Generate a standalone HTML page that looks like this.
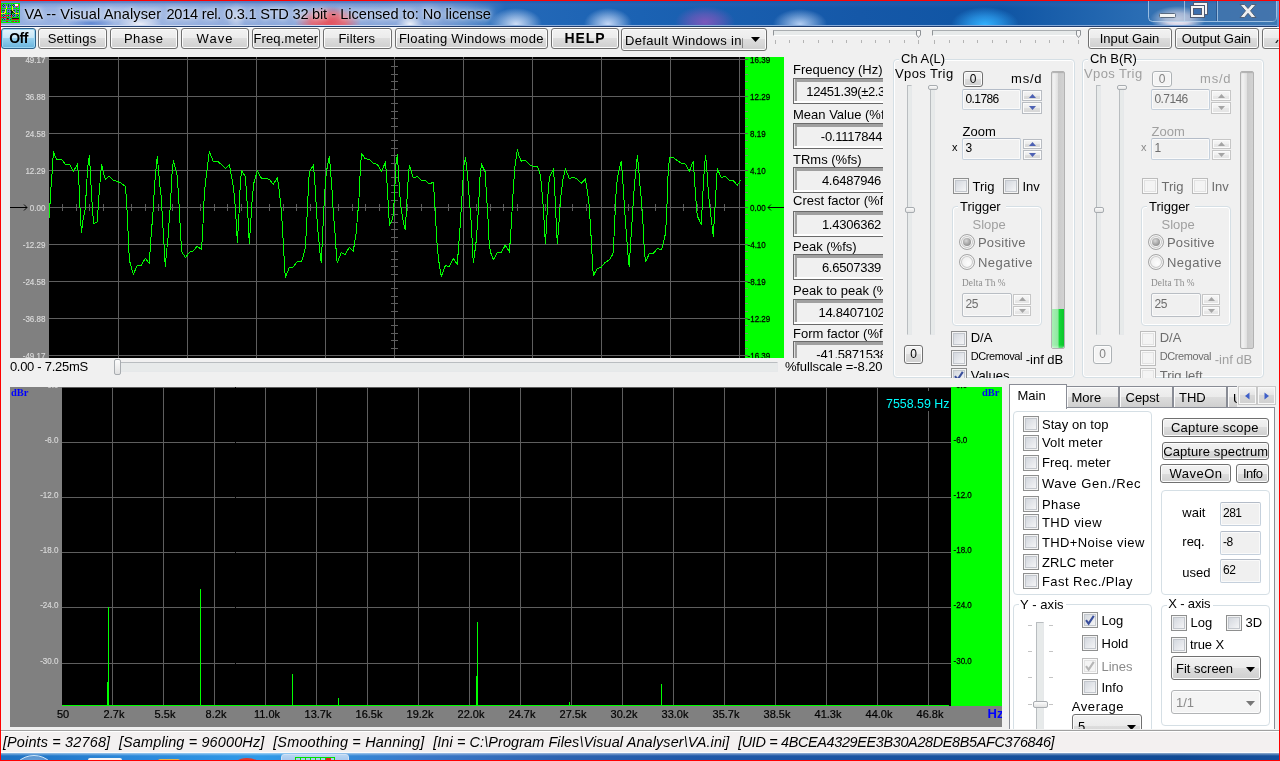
<!DOCTYPE html>
<html lang="en"><head><meta charset="utf-8">
<title>VA -- Visual Analyser 2014 rel. 0.3.1 STD 32 bit</title>
<style>
html,body{margin:0;padding:0;}
body{width:1280px;height:761px;overflow:hidden;background:#f0f0f0;font-family:"Liberation Sans",sans-serif;font-size:13px;color:#000;position:relative;}
#win{position:absolute;left:0;top:0;width:1280px;height:761px;overflow:hidden;background:#f0f0f0;will-change:transform;}
#win div{position:absolute;box-sizing:content-box;}
.t{white-space:pre;}
.btn{border:1px solid #707070;border-radius:3px;box-shadow:inset 0 0 0 1px #fcfcfc;
 background:linear-gradient(to bottom,#f2f2f2 0%,#ebebeb 50%,#dddddd 50%,#cfcfcf 100%);
 text-align:center;white-space:pre;overflow:hidden;}
.btn span{display:block;font-size:13px;}
.btn.def{border-color:#2c628b;box-shadow:inset 0 0 0 1px #9ed7f3;
 background:linear-gradient(to bottom,#e5f4fc 0%,#c4e5f6 50%,#98d1ef 50%,#68b3db 100%);}
.btn.dis{border-color:#adb2b5;background:#f4f4f4;color:#838383;}
.grp{border:1px solid #d5dfe5;border-radius:4px;box-shadow:inset 0 0 0 1px #fff;}
.cb{border:1px solid #8e8f8f;background:linear-gradient(135deg,#cdd2d9 0%,#e6e8ec 55%,#fbfbfb 100%);box-shadow:inset 0 0 0 1px #f4f4f4,inset 0 0 0 2px #c3c7cd;}
.cb.dis{border-color:#bcbcbc;background:#f4f4f4;box-shadow:inset 0 0 0 1px #fafafa,inset 0 0 0 2px #e2e2e2;}
.cb svg{position:absolute;left:0;top:0;}
.rd{border:1px solid #a6a6a6;border-radius:50%;background:radial-gradient(circle at 60% 60%,#fdfdfd 0%,#f0f0f0 55%,#dcdcdc 100%);box-shadow:inset 0 0 0 1px #f8f8f8,inset 0 0 0 2px #cacaca;}
.rd i{position:absolute;left:3px;top:3px;right:3px;bottom:3px;border-radius:50%;background:radial-gradient(circle at 40% 35%,#d8d8d8 0%,#9c9c9c 60%,#888 100%);}
.edit{border:1px solid #c5d0dc;border-top-color:#b4bcc8;background:#f0f0f0;border-radius:2px;box-shadow:inset 0 0 0 1px #fafafa;}
.edit.w{background:#f0f0f0;}
.sunk{border:1px solid #6a6a6a;background:#f0f0f0;box-shadow:inset 0 -2px 0 0 #fff,inset 1px 0 0 0 #dedede,inset 3px 3px 0 0 #a0a0a0;overflow:hidden;}
.spn{border:1px solid #b8bcc2;background:linear-gradient(to bottom,#f4f4f4 0%,#ececec 50%,#dedede 50%,#d4d4d4 100%);box-shadow:inset 0 0 0 1px #fbfbfb;}
.spn.dis{border-color:#c6c6c6;background:linear-gradient(to bottom,#f6f6f6 0%,#f0f0f0 50%,#e8e8e8 50%,#e4e4e4 100%);}
.trk{border:1px solid #b9bdc0;border-right-color:#e6e8ea;border-bottom-color:#e6e8ea;background:#e7eaea;}
.thumb{border:1px solid #a8acb0;border-radius:2px;background:linear-gradient(to bottom,#fcfcfc,#e2e2e2);}
.combo{border:1px solid #707070;border-radius:3px;box-shadow:inset 0 0 0 1px #fcfcfc;
 background:linear-gradient(to bottom,#f2f2f2 0%,#ebebeb 50%,#dddddd 50%,#cfcfcf 100%);overflow:hidden;}
.combo.dis{border-color:#b2b4b6;background:#f4f4f4;}
.tab{border:1px solid #898c95;border-bottom:none;background:linear-gradient(to bottom,#f2f2f2 0%,#ebebeb 50%,#dddddd 50%,#cfcfcf 100%);box-shadow:inset 1px 1px 0 0 #fcfcfc;}
</style></head><body><div id="win">

<div id="titlebar" style="left:0;top:0;width:1280px;height:25px;overflow:hidden;
background:
 radial-gradient(ellipse 33px 16px at 328px 22px, rgba(228,80,92,1) 0%, rgba(232,96,108,.9) 50%, rgba(235,110,120,0) 100%),
 radial-gradient(ellipse 24px 5px at 91px 23px, rgba(60,110,200,.75) 0%, rgba(60,110,200,0) 100%),
 radial-gradient(ellipse 22px 7px at 140px 24px, rgba(245,245,250,.9) 0%, rgba(245,245,250,0) 100%),
 radial-gradient(ellipse 9px 16px at 236px 18px, rgba(235,238,248,.55) 0%, rgba(235,238,248,0) 100%),
 radial-gradient(ellipse 14px 8px at 410px 24px, rgba(255,255,255,.85) 0%, rgba(255,255,255,0) 100%),
 radial-gradient(ellipse 26px 16px at 516px 24px, rgba(215,228,250,.95) 0%, rgba(215,228,250,.5) 50%, rgba(210,225,250,0) 100%),
 radial-gradient(ellipse 24px 16px at 608px 24px, rgba(205,222,250,.95) 0%, rgba(205,222,250,.5) 50%, rgba(200,220,250,0) 100%),
 radial-gradient(ellipse 30px 16px at 705px 22px, rgba(128,88,188,.95) 0%, rgba(128,88,188,.55) 50%, rgba(130,90,190,0) 100%),
 radial-gradient(ellipse 27px 15px at 800px 24px, rgba(195,218,250,.9) 0%, rgba(195,218,250,.45) 50%, rgba(190,215,250,0) 100%),
 radial-gradient(ellipse 34px 18px at 985px 25px, rgba(50,178,255,1) 0%, rgba(50,170,250,.6) 50%, rgba(60,180,255,0) 100%),
 radial-gradient(ellipse 28px 13px at 1178px 19px, rgba(255,244,248,1) 0%, rgba(255,238,244,.8) 45%, rgba(255,235,240,0) 100%),
 linear-gradient(to bottom, rgba(40,85,170,.55) 0, rgba(40,85,170,.55) 2px, rgba(60,100,180,.25) 4px, rgba(60,100,180,0) 8px),
 linear-gradient(to right,#93aee0 0px,#9fb7e4 120px,#8eaadc 250px,#86a5da 430px,#5a8ccc 470px,#2469b8 505px,#1b62b3 640px,#1558a8 860px,#0f55a4 1000px,#2a6db4 1140px,#3f78b2 1280px);">
</div>
<div style="left:0px;top:25px;width:1280px;height:1px;background:linear-gradient(to right,#d3def2 0,#c8d6f0 400px,#8fb0dc 480px,#7fa5d6 1280px)"></div>
<div style="left:0px;top:26px;width:1280px;height:1px;background:#1f3d70"></div>
<div style="left:0px;top:27px;width:1280px;height:1px;background:#fbfbfb"></div>
<div style="left:1px;top:3px;width:19px;height:20px;background:#00e000;overflow:hidden">
<svg width="19" height="20" viewBox="0 0 19 20" shape-rendering="crispEdges" style="position:absolute;left:0;top:0">
<rect width="19" height="20" fill="#00f000"/>
<rect x="1" y="1" width="17" height="18" fill="#5a6fd8"/>
<g stroke="#0a6a20" stroke-width="1" stroke-dasharray="1 1"><path d="M1 2.500H18M1 7.500H18M1 12.500H18M1 16.500H18M2.500 1V19M7.500 1V19M12.500 1V19M16.500 1V19"/></g>
<g stroke="#00e400" stroke-width="1"><path d="M0 5.500H19M0 10.500H19M0 14.500H19M5.500 0V19M10.500 0V19M15.500 0V19"/></g>
<rect x="1" y="17" width="17" height="1" fill="#10d820"/><path d="M5 18.500H8M11 18.500H18" stroke="#c02818" stroke-dasharray="2 1"/>
<g fill="#081808"><rect x="10" y="7" width="2" height="3"/><rect x="10" y="10" width="1" height="2"/><rect x="13" y="10" width="1" height="1"/><rect x="11" y="15" width="7" height="1"/><rect x="6" y="15" width="1" height="1"/></g>
<path d="M0 10.500H3.500L4.500 8.500L5.500 3.500" stroke="#f4ec20" fill="none"/><path d="M11.500 3V7.500L13.500 9.500L15 10.500H18" stroke="#f4ec20" fill="none"/>
<rect x="0" y="14" width="6" height="1" fill="#e81818"/><rect x="4" y="12" width="4" height="1" fill="#e81818"/><rect x="10" y="12" width="1" height="3" fill="#e81818"/><rect x="5" y="16" width="3" height="1" fill="#d02020"/><rect x="11" y="16" width="7" height="1" fill="#d02020"/>
<rect x="14" y="1" width="3" height="2" fill="#fff"/><rect x="15" y="3" width="2" height="1" fill="#f03030"/><rect x="17" y="1" width="1" height="2" fill="#f03030"/>
</svg></div>
<div class="t" style="left:24.4px;top:7.04px;font-size:14.6px;line-height:14.6px;color:#000;letter-spacing:0.089px;text-shadow:0 0 6px rgba(255,255,255,.85),0 0 10px rgba(255,255,255,.6),0 0 3px rgba(255,255,255,.5);">VA -- Visual Analyser</div>
<div class="t" style="left:166.4px;top:7.04px;font-size:14.6px;line-height:14.6px;color:#000;letter-spacing:-0.225px;text-shadow:0 0 6px rgba(255,255,255,.85),0 0 10px rgba(255,255,255,.6),0 0 3px rgba(255,255,255,.5);">2014 rel. 0.3.1 STD 32 bit</div>
<div class="t" style="left:331.29999999999995px;top:7.04px;font-size:14.6px;line-height:14.6px;color:#000;letter-spacing:-0.009px;text-shadow:0 0 6px rgba(255,255,255,.85),0 0 10px rgba(255,255,255,.6),0 0 3px rgba(255,255,255,.5);">- Licensed to: No license</div>
<div style="left:1148px;top:0;width:130px;height:23px">
<svg width="130" height="23" viewBox="0 0 130 23">
<path d="M0.5 -1V17.5Q0.5 21.5 4.5 21.5H124.5Q128.5 21.5 128.5 17.5V-1" fill="rgba(70,120,175,.35)" stroke="rgba(190,215,240,.75)" stroke-width="1"/>
<path d="M36.5 0V21M69.5 0V21" stroke="rgba(190,215,240,.7)" stroke-width="1"/>
<path d="M69.5 0V21" stroke="rgba(30,60,110,.5)" stroke-width="1" transform="translate(-1,0)"/>
<rect x="71" y="0" width="57" height="21" fill="rgba(70,115,170,.55)"/>
<rect x="11.5" y="13.5" width="16" height="4" rx="1" fill="#f4f4f4" stroke="#5a6a80" stroke-width="1"/>
<g stroke="#4d5a74" stroke-width="1"><rect x="45.500" y="2.500" width="14" height="12" fill="#f4f4f4"/><rect x="48.500" y="5.500" width="8" height="6" fill="#3d6fae"/>
<rect x="42.500" y="5.500" width="14" height="12" fill="#f4f4f4"/><rect x="45.500" y="8.500" width="8" height="6" fill="#3d6fae"/></g>
<path d="M92 4.500H96.500L100 8.500L103.500 4.500H108L102.500 10.800L108 17.500H103.500L100 13.300L96.500 17.500H92L97.500 10.800Z" fill="#f0f0f0" stroke="#4a5a72" stroke-width="0.9"/>
</svg></div>
<div style="left:1277px;top:0px;width:2px;height:27px;background:linear-gradient(to bottom,#6f9fd0,#5f8fc8)"></div>
<div class="btn def" style="left:1px;top:28px;width:33px;height:19px;"><span style=""></span></div>
<div class="t" style="left:9.200000000000001px;top:31.45px;font-size:14px;line-height:14px;color:#000;letter-spacing:-0.509px;font-weight:bold;">Off</div>
<div class="btn" style="left:38px;top:28px;width:66.5px;height:19px;"><span style=""></span></div>
<div class="t" style="left:47.699999999999996px;top:31.70px;font-size:13px;line-height:13px;color:#000;letter-spacing:0.217px;">Settings</div>
<div class="btn" style="left:110px;top:28px;width:66px;height:19px;"><span style=""></span></div>
<div class="t" style="left:123.9px;top:31.70px;font-size:13px;line-height:13px;color:#000;letter-spacing:0.556px;">Phase</div>
<div class="btn" style="left:181px;top:28px;width:66px;height:19px;"><span style=""></span></div>
<div class="t" style="left:196.6px;top:31.70px;font-size:13px;line-height:13px;color:#000;letter-spacing:1.083px;">Wave</div>
<div class="btn" style="left:252px;top:28px;width:66px;height:19px;"><span style=""></span></div>
<div class="t" style="left:253.4px;top:31.70px;font-size:13px;line-height:13px;color:#000;letter-spacing:0.136px;">Freq.meter</div>
<div class="btn" style="left:323px;top:28px;width:66.5px;height:19px;"><span style=""></span></div>
<div class="t" style="left:338.4px;top:31.70px;font-size:13px;line-height:13px;color:#000;letter-spacing:0.218px;">Filters</div>
<div class="btn" style="left:395px;top:28px;width:151px;height:19px;"><span style=""></span></div>
<div class="t" style="left:398.9px;top:31.70px;font-size:13px;line-height:13px;color:#000;letter-spacing:0.288px;">Floating Windows mode</div>
<div class="btn" style="left:551px;top:28px;width:66px;height:19px;"><span style=""></span></div>
<div class="t" style="left:564.4px;top:31.25px;font-size:14px;line-height:14px;color:#000;letter-spacing:0.952px;font-weight:bold;">HELP</div>
<div class="combo" style="left:621px;top:28px;width:144px;height:21px"><span class="t" style="position:absolute;left:3px;top:3.500px;font-size:13px;line-height:16px;width:118px;letter-spacing:.3px;overflow:hidden;display:block;white-space:pre">Default Windows input</span><svg style="position:absolute;left:129px;top:8px" width="9" height="5" viewBox="0 0 9 5"><polygon points="0,0 9,0 4.5,5" fill="#000"/></svg></div>
<div class="trk" style="left:773px;top:30px;width:146px;height:4px;border-top-color:#a9adb0;border-left-color:#8f9396;border-bottom-color:#fdfdfd"></div>
<div style="left:775px;top:40px;width:1px;height:4px;background:#b4b4b4"></div>
<div style="left:789px;top:40px;width:1px;height:3px;background:#b4b4b4"></div>
<div style="left:803px;top:40px;width:1px;height:3px;background:#b4b4b4"></div>
<div style="left:818px;top:40px;width:1px;height:3px;background:#b4b4b4"></div>
<div style="left:832px;top:40px;width:1px;height:3px;background:#b4b4b4"></div>
<div style="left:846px;top:40px;width:1px;height:3px;background:#b4b4b4"></div>
<div style="left:861px;top:40px;width:1px;height:3px;background:#b4b4b4"></div>
<div style="left:875px;top:40px;width:1px;height:3px;background:#b4b4b4"></div>
<div style="left:889px;top:40px;width:1px;height:3px;background:#b4b4b4"></div>
<div style="left:904px;top:40px;width:1px;height:3px;background:#b4b4b4"></div>
<div style="left:918px;top:40px;width:1px;height:4px;background:#b4b4b4"></div>
<div style="left:916px;top:30px;width:5px;height:8px"><svg width="5" height="8" viewBox="0 0 5 8" style="position:absolute;left:0;top:0;display:block"><path d="M0.500 0.500H4.500V5L2.500 7.500L0.500 5Z" fill="#f6f6f6" stroke="#8e9296"/></svg></div>
<div class="trk" style="left:932px;top:30px;width:147px;height:4px;border-top-color:#a9adb0;border-left-color:#8f9396;border-bottom-color:#fdfdfd"></div>
<div style="left:934px;top:40px;width:1px;height:4px;background:#b4b4b4"></div>
<div style="left:949px;top:40px;width:1px;height:3px;background:#b4b4b4"></div>
<div style="left:963px;top:40px;width:1px;height:3px;background:#b4b4b4"></div>
<div style="left:977px;top:40px;width:1px;height:3px;background:#b4b4b4"></div>
<div style="left:992px;top:40px;width:1px;height:3px;background:#b4b4b4"></div>
<div style="left:1006px;top:40px;width:1px;height:3px;background:#b4b4b4"></div>
<div style="left:1020px;top:40px;width:1px;height:3px;background:#b4b4b4"></div>
<div style="left:1035px;top:40px;width:1px;height:3px;background:#b4b4b4"></div>
<div style="left:1049px;top:40px;width:1px;height:3px;background:#b4b4b4"></div>
<div style="left:1063px;top:40px;width:1px;height:3px;background:#b4b4b4"></div>
<div style="left:1078px;top:40px;width:1px;height:4px;background:#b4b4b4"></div>
<div style="left:1076px;top:30px;width:5px;height:8px"><svg width="5" height="8" viewBox="0 0 5 8" style="position:absolute;left:0;top:0;display:block"><path d="M0.500 0.500H4.500V5L2.500 7.500L0.500 5Z" fill="#f6f6f6" stroke="#8e9296"/></svg></div>
<div class="btn" style="left:1088px;top:28px;width:82px;height:19px;"><span style=""></span></div>
<div class="t" style="left:1099.8000000000002px;top:31.70px;font-size:13px;line-height:13px;color:#000;letter-spacing:-0.067px;">Input Gain</div>
<div class="btn" style="left:1175px;top:28px;width:82px;height:19px;"><span style=""></span></div>
<div class="t" style="left:1181.8000000000002px;top:31.70px;font-size:13px;line-height:13px;color:#000;letter-spacing:-0.081px;">Output Gain</div>
<div class="btn" style="left:1262px;top:28px;width:38px;height:19px;"><span style=""></span></div>
<div style="left:1274px;top:35px;width:5px;height:8px;overflow:hidden"><svg width="5" height="8"><path d="M0 7L4 1" stroke="#222" stroke-width="1.3"/></svg></div>
<div id="scope" style="left:10px;top:57px;width:774px;height:301px;overflow:hidden"><svg width="774" height="301" viewBox="10 57 774 301" style="position:absolute;left:0;top:0;font-family:'Liberation Sans', sans-serif"><rect x="10" y="57" width="39" height="301" fill="#808080"/><rect x="49" y="57" width="696" height="301" fill="#000"/><rect x="745" y="57" width="39" height="301" fill="#00ff00"/><g shape-rendering="crispEdges" stroke="#5e5e5e" stroke-width="1"><path d="M49 59.5H748"/><path d="M49 96.5H748"/><path d="M49 133.5H748"/><path d="M49 170.5H748"/><path d="M49 207.5H748"/><path d="M49 244.5H748"/><path d="M49 281.5H748"/><path d="M49 318.5H748"/><path d="M49 355.5H748"/><path d="M118.5 57V358"/><path d="M187.5 57V358"/><path d="M256.5 57V358"/><path d="M325.5 57V358"/><path d="M394.5 57V358"/><path d="M463.5 57V358"/><path d="M532.5 57V358"/><path d="M601.5 57V358"/><path d="M670.5 57V358"/><path d="M739.5 57V358"/><path d="M62.5 204V211"/><path d="M76.5 204V211"/><path d="M89.5 204V211"/><path d="M103.5 204V211"/><path d="M131.5 204V211"/><path d="M145.5 204V211"/><path d="M158.5 204V211"/><path d="M172.5 204V211"/><path d="M200.5 204V211"/><path d="M214.5 204V211"/><path d="M227.5 204V211"/><path d="M241.5 204V211"/><path d="M269.5 204V211"/><path d="M283.5 204V211"/><path d="M296.5 204V211"/><path d="M310.5 204V211"/><path d="M338.5 204V211"/><path d="M352.5 204V211"/><path d="M365.5 204V211"/><path d="M379.5 204V211"/><path d="M407.5 204V211"/><path d="M421.5 204V211"/><path d="M434.5 204V211"/><path d="M448.5 204V211"/><path d="M476.5 204V211"/><path d="M490.5 204V211"/><path d="M503.5 204V211"/><path d="M517.5 204V211"/><path d="M545.5 204V211"/><path d="M559.5 204V211"/><path d="M572.5 204V211"/><path d="M586.5 204V211"/><path d="M614.5 204V211"/><path d="M628.5 204V211"/><path d="M641.5 204V211"/><path d="M655.5 204V211"/><path d="M683.5 204V211"/><path d="M697.5 204V211"/><path d="M710.5 204V211"/><path d="M724.5 204V211"/><path d="M391 66.5H398"/><path d="M391 74.5H398"/><path d="M391 81.5H398"/><path d="M391 89.5H398"/><path d="M391 103.5H398"/><path d="M391 111.5H398"/><path d="M391 118.5H398"/><path d="M391 126.5H398"/><path d="M391 140.5H398"/><path d="M391 148.5H398"/><path d="M391 155.5H398"/><path d="M391 163.5H398"/><path d="M391 177.5H398"/><path d="M391 185.5H398"/><path d="M391 192.5H398"/><path d="M391 200.5H398"/><path d="M391 214.5H398"/><path d="M391 222.5H398"/><path d="M391 229.5H398"/><path d="M391 237.5H398"/><path d="M391 251.5H398"/><path d="M391 259.5H398"/><path d="M391 266.5H398"/><path d="M391 274.5H398"/><path d="M391 288.5H398"/><path d="M391 296.5H398"/><path d="M391 303.5H398"/><path d="M391 311.5H398"/><path d="M391 325.5H398"/><path d="M391 333.5H398"/><path d="M391 340.5H398"/><path d="M391 348.5H398"/></g><g shape-rendering="crispEdges" stroke="#788a78" stroke-width="1"><path d="M745 66.5H748"/><path d="M745 74.5H748"/><path d="M745 81.5H748"/><path d="M745 89.5H748"/><path d="M745 103.5H748"/><path d="M745 111.5H748"/><path d="M745 118.5H748"/><path d="M745 126.5H748"/><path d="M745 140.5H748"/><path d="M745 148.5H748"/><path d="M745 155.5H748"/><path d="M745 163.5H748"/><path d="M745 177.5H748"/><path d="M745 185.5H748"/><path d="M745 192.5H748"/><path d="M745 200.5H748"/><path d="M745 214.5H748"/><path d="M745 222.5H748"/><path d="M745 229.5H748"/><path d="M745 237.5H748"/><path d="M745 251.5H748"/><path d="M745 259.5H748"/><path d="M745 266.5H748"/><path d="M745 274.5H748"/><path d="M745 288.5H748"/><path d="M745 296.5H748"/><path d="M745 303.5H748"/><path d="M745 311.5H748"/><path d="M745 325.5H748"/><path d="M745 333.5H748"/><path d="M745 340.5H748"/><path d="M745 348.5H748"/></g><polyline fill="none" stroke="#00ff00" stroke-width="1" stroke-linejoin="miter" shape-rendering="crispEdges" points="49.0,217.9 49.8,207.9 50.6,191.9 52.0,174.0 53.4,151.4 55.0,156.0 57.0,159.4 61.6,159.4 65.4,164.2 69.6,164.2 73.4,171.4 77.4,164.4 78.4,173.0 79.4,191.9 80.0,207.9 81.4,232.5 83.0,219.9 85.4,207.9 86.5,185.9 87.9,166.0 89.5,155.0 90.5,176.0 91.9,199.9 93.5,223.5 97.3,221.9 98.5,201.9 99.9,183.9 101.5,164.4 103.3,172.0 105.3,179.4 109.3,176.2 113.3,180.4 117.3,181.4 121.3,183.3 125.3,186.3 126.5,199.9 127.9,227.9 129.3,259.9 130.9,265.8 133.3,274.4 137.3,265.4 141.3,265.2 145.3,258.3 149.3,263.3 150.5,243.9 151.9,225.9 153.3,207.9 154.5,185.9 155.9,170.0 157.3,156.4 158.5,170.0 159.9,185.9 161.3,197.9 162.5,219.9 163.9,241.9 165.3,267.4 166.5,251.9 167.9,239.9 169.2,219.9 170.4,205.9 171.8,176.0 173.4,160.0 174.8,166.0 177.2,176.0 178.8,199.9 179.8,219.9 181.2,243.9 181.8,251.9 185.4,257.5 189.2,252.5 193.2,250.9 197.2,246.3 201.2,249.3 201.6,249.5 203.0,223.9 204.4,191.9 207.0,170.0 209.4,151.4 213.0,161.0 217.6,161.4 221.4,164.4 225.4,168.4 229.4,164.4 231.0,174.0 233.4,186.9 235.4,207.9 237.4,242.5 239.0,213.9 240.0,189.9 241.4,170.6 245.3,176.4 246.5,191.9 247.9,215.9 249.3,243.9 250.9,219.9 252.3,197.9 253.9,182.9 257.3,171.0 261.3,178.0 265.3,178.0 269.3,179.4 273.3,184.3 277.3,178.0 278.9,187.9 281.3,209.9 282.9,235.9 283.9,253.9 285.3,277.4 289.3,267.4 293.3,267.0 297.3,261.3 301.3,261.9 303.9,253.9 305.3,247.9 306.5,227.9 307.9,197.9 309.3,172.0 313.3,165.4 314.5,176.0 315.9,199.9 317.3,223.9 319.9,251.9 321.3,263.3 322.5,235.9 323.9,207.9 325.2,185.9 326.4,172.0 327.8,164.0 329.4,156.4 330.8,174.0 332.2,191.9 333.2,211.9 334.8,229.9 335.8,245.9 337.2,263.3 341.2,252.5 345.2,254.5 349.2,247.5 353.2,251.3 354.8,241.9 356.0,233.9 357.6,215.9 359.0,197.9 360.0,176.0 361.4,153.4 365.0,158.4 369.0,159.4 373.6,163.4 377.4,164.4 381.4,171.4 385.4,162.4 386.6,176.0 388.0,199.9 389.4,225.5 392.0,219.9 393.4,213.9 394.6,191.9 396.0,164.0 397.4,154.4 398.5,174.0 399.9,195.9 401.3,209.9 402.9,219.9 405.3,230.3 406.5,207.9 407.9,183.9 409.3,165.4 410.9,170.0 413.3,178.0 417.3,176.4 421.3,180.4 425.3,180.6 429.3,183.9 433.3,182.3 434.5,197.9 435.9,223.9 437.3,247.9 438.9,261.9 441.3,276.4 445.3,265.8 449.3,266.2 453.3,258.5 457.3,264.3 458.5,247.9 459.9,229.9 461.3,207.9 462.5,187.9 463.9,166.0 465.5,157.4 466.9,170.0 468.3,183.9 469.3,199.9 470.9,217.9 471.9,235.9 473.3,263.3 475.9,243.9 477.3,225.9 478.5,207.9 479.9,178.0 481.4,164.4 485.2,172.0 486.4,193.9 487.8,213.9 489.2,243.9 490.4,251.9 493.4,259.5 497.2,252.9 501.2,252.5 505.2,245.3 509.2,251.3 510.4,239.9 512.0,211.9 513.4,187.9 515.0,166.0 517.4,149.4 519.0,156.0 521.4,161.4 525.0,160.0 529.6,164.6 533.4,167.0 537.4,166.4 540.0,174.0 541.4,183.9 543.0,203.9 544.0,219.9 545.4,243.9 546.6,223.9 548.0,193.9 549.4,177.0 553.4,169.4 554.5,183.9 555.9,215.9 557.3,243.9 558.9,223.9 559.9,207.9 561.3,191.9 562.9,180.0 565.3,168.4 569.3,178.4 573.3,177.2 577.3,179.0 581.3,183.3 585.3,179.4 586.9,187.9 588.9,201.9 590.5,225.9 591.9,251.9 593.3,275.8 597.3,268.4 601.3,267.2 605.3,262.3 609.3,259.9 611.9,255.9 613.3,251.9 614.5,225.9 615.9,195.9 617.3,178.0 619.9,166.0 621.3,161.0 622.5,176.0 623.9,197.9 625.3,219.9 626.9,239.9 627.9,253.9 629.3,267.4 630.5,243.9 631.9,223.9 633.3,201.9 634.5,183.9 635.9,170.0 637.4,155.4 638.8,170.0 640.0,185.9 641.4,199.9 643.0,223.9 644.0,243.9 645.4,262.3 649.4,253.5 653.4,253.3 657.4,248.5 661.4,249.9 663.0,243.9 665.4,233.9 666.6,215.9 668.0,176.0 669.4,157.6 673.4,157.6 677.4,160.6 681.4,163.4 685.3,164.0 689.3,171.4 693.3,161.0 694.5,180.0 695.9,199.9 697.3,215.9 701.3,224.5 702.5,199.9 703.9,176.0 705.5,155.0 706.9,170.0 707.9,185.9 709.3,201.9 710.9,215.9 713.3,236.5 714.5,215.9 715.9,191.9 717.3,168.6 721.3,177.6 725.3,176.4 729.3,180.4 733.3,180.6 737.3,185.3 740.9,180.0"/><text transform="translate(45.500,62.8) scale(.82,1)" font-size="9.8" stroke="#d8d8d8" stroke-width=".2" fill="#d8d8d8" text-anchor="end">49.17</text><text transform="translate(45.500,99.8) scale(.82,1)" font-size="9.8" stroke="#d8d8d8" stroke-width=".2" fill="#d8d8d8" text-anchor="end">36.88</text><text transform="translate(45.500,136.8) scale(.82,1)" font-size="9.8" stroke="#d8d8d8" stroke-width=".2" fill="#d8d8d8" text-anchor="end">24.58</text><text transform="translate(45.500,173.8) scale(.82,1)" font-size="9.8" stroke="#d8d8d8" stroke-width=".2" fill="#d8d8d8" text-anchor="end">12.29</text><text transform="translate(45.500,210.8) scale(.82,1)" font-size="9.8" stroke="#d8d8d8" stroke-width=".2" fill="#d8d8d8" text-anchor="end">0.00</text><text transform="translate(45.500,247.8) scale(.82,1)" font-size="9.8" stroke="#d8d8d8" stroke-width=".2" fill="#d8d8d8" text-anchor="end">-12.29</text><text transform="translate(45.500,284.8) scale(.82,1)" font-size="9.8" stroke="#d8d8d8" stroke-width=".2" fill="#d8d8d8" text-anchor="end">-24.58</text><text transform="translate(45.500,321.8) scale(.82,1)" font-size="9.8" stroke="#d8d8d8" stroke-width=".2" fill="#d8d8d8" text-anchor="end">-36.88</text><text transform="translate(45.500,358.8) scale(.82,1)" font-size="9.8" stroke="#d8d8d8" stroke-width=".2" fill="#d8d8d8" text-anchor="end">-49.17</text><text transform="translate(750,62.8) scale(.82,1)" font-size="9.8" stroke="#000" stroke-width=".25" fill="#000">16.39</text><text transform="translate(750,99.8) scale(.82,1)" font-size="9.8" stroke="#000" stroke-width=".25" fill="#000">12.29</text><text transform="translate(750,136.8) scale(.82,1)" font-size="9.8" stroke="#000" stroke-width=".25" fill="#000">8.19</text><text transform="translate(750,173.8) scale(.82,1)" font-size="9.8" stroke="#000" stroke-width=".25" fill="#000">4.10</text><text transform="translate(750,210.8) scale(.82,1)" font-size="9.8" stroke="#000" stroke-width=".25" fill="#000">0.00</text><text transform="translate(747.5,247.8) scale(.82,1)" font-size="9.8" stroke="#000" stroke-width=".25" fill="#000">-4.10</text><text transform="translate(747.5,284.8) scale(.82,1)" font-size="9.8" stroke="#000" stroke-width=".25" fill="#000">-8.19</text><text transform="translate(747.5,321.8) scale(.82,1)" font-size="9.8" stroke="#000" stroke-width=".25" fill="#000">-12.29</text><text transform="translate(747.5,358.8) scale(.82,1)" font-size="9.8" stroke="#000" stroke-width=".25" fill="#000">-16.39</text><g stroke="#000" stroke-width="1" fill="none" shape-rendering="crispEdges"><path d="M10 207.500H27"/><path d="M24 204.500L27 207.500L24 210.500" shape-rendering="auto" stroke-width=".9"/></g><g stroke="#000" stroke-width="1" fill="none" shape-rendering="crispEdges"><path d="M768 207.500H784"/><path d="M771 204.500L768 207.500L771 210.500" shape-rendering="auto" stroke-width=".9"/></g></svg></div>
<div class="t" style="left:9.9px;top:360.00px;font-size:13px;line-height:13px;color:#000;letter-spacing:-0.288px;">0.00 - 7.25mS</div>
<div class="trk" style="left:118px;top:362px;width:658px;height:8px;border-radius:1px"></div>
<div class="thumb" style="left:114px;top:359px;width:5px;height:14px;"></div>
<div class="t" style="left:784.9px;top:360.00px;font-size:13px;line-height:13px;color:#000;letter-spacing:-0.105px;">%fullscale =-8.20</div>
<div id="meas" style="left:793px;top:57px;width:89.500px;height:301px;overflow:hidden">
<div class="t" style="left:0px;top:6.00px;font-size:13px;line-height:13px;color:#000;">Frequency (Hz)</div>
<div class="sunk" style="left:0;top:21px;width:118px;height:24px"><div class="t" style="left:12.300px;top:5.70px;font-size:13px;line-height:13px;letter-spacing:-.4px">12451.39(&plusmn;2.34)</div></div>
<div class="t" style="left:0px;top:50.65px;font-size:13px;line-height:13px;color:#000;">Mean Value (%fs)</div>
<div class="sunk" style="left:0;top:66px;width:118px;height:24px"><div class="t" style="left:0;top:5.70px;font-size:13px;line-height:13px;width:115px;text-align:center;letter-spacing:-.25px">-0.1117844</div></div>
<div class="t" style="left:0px;top:95.90px;font-size:13px;line-height:13px;color:#000;">TRms (%fs)</div>
<div class="sunk" style="left:0;top:110px;width:118px;height:24px"><div class="t" style="left:0;top:5.70px;font-size:13px;line-height:13px;width:115px;text-align:center;letter-spacing:-.25px">4.6487946</div></div>
<div class="t" style="left:0px;top:136.60px;font-size:13px;line-height:13px;color:#000;">Crest factor (%fs)</div>
<div class="sunk" style="left:0;top:154px;width:118px;height:24px"><div class="t" style="left:0;top:5.70px;font-size:13px;line-height:13px;width:115px;text-align:center;letter-spacing:-.25px">1.4306362</div></div>
<div class="t" style="left:0px;top:182.75px;font-size:13px;line-height:13px;color:#000;">Peak (%fs)</div>
<div class="sunk" style="left:0;top:197px;width:118px;height:24px"><div class="t" style="left:0;top:5.70px;font-size:13px;line-height:13px;width:115px;text-align:center;letter-spacing:-.25px">6.6507339</div></div>
<div class="t" style="left:0px;top:226.55px;font-size:13px;line-height:13px;color:#000;">Peak to peak (%fs)</div>
<div class="sunk" style="left:0;top:242px;width:118px;height:24px"><div class="t" style="left:0;top:5.70px;font-size:13px;line-height:13px;width:115px;text-align:center;letter-spacing:-.25px">14.8407102</div></div>
<div class="t" style="left:0px;top:269.50px;font-size:13px;line-height:13px;color:#000;">Form factor (%fs)</div>
<div class="sunk" style="left:0;top:284px;width:118px;height:24px"><div class="t" style="left:0;top:5.70px;font-size:13px;line-height:13px;width:115px;text-align:center;letter-spacing:-.25px">-41.5871538</div></div>
</div>
<div class="grp" style="left:893px;top:59px;width:180px;height:317px"></div>
<div style="left:899px;top:58px;width:46px;height:3px;background:#f0f0f0"></div>
<div class="t" style="left:901px;top:51.50px;font-size:13px;line-height:13px;color:#000;">Ch A(L)</div>
<div class="t" style="left:895px;top:66.50px;font-size:13px;line-height:13px;color:#000;letter-spacing:.4px">Vpos Trig</div>
<div class="trk" style="left:907px;top:85px;width:3px;height:248px;"></div>
<div class="trk" style="left:930px;top:85px;width:3px;height:248px;"></div>
<div class="thumb" style="left:905px;top:207px;width:8px;height:4px;"></div>
<div class="thumb" style="left:928px;top:85px;width:8px;height:3px;"></div>
<div class="btn" style="left:963px;top:71px;width:18px;height:14px;"><span style="line-height:14px;font-size:12px">0</span></div>
<div class="t" style="left:1011px;top:71.80px;font-size:13px;line-height:13px;color:#000;letter-spacing:.8px">ms/d</div>
<div class="edit" style="left:962px;top:89px;width:57px;height:19px;"></div>
<div class="t" style="left:965.5px;top:92.54px;font-size:12px;line-height:12px;color:#000;letter-spacing:-.6px">0.1786</div>
<div class="spn" style="left:1022px;top:90px;width:18px;height:9px"><svg width="7" height="4" viewBox="0 0 7 4" style="position:absolute;left:5.5px;top:2.5px"><polygon points="0,4 3.5,0 7,4" fill="#4d61b3"/></svg></div>
<div class="spn" style="left:1022px;top:101.5px;width:18px;height:10px"><svg width="7" height="4" viewBox="0 0 7 4" style="position:absolute;left:5.5px;top:3.0px"><polygon points="0,0 7,0 3.5,4" fill="#4d61b3"/></svg></div>
<div class="t" style="left:962.5px;top:124.50px;font-size:13px;line-height:13px;color:#000;">Zoom</div>
<div class="t" style="left:952px;top:141.69px;font-size:11px;line-height:11px;color:#000;">x</div>
<div class="edit" style="left:962px;top:138px;width:57px;height:20px;"></div>
<div class="t" style="left:965.5px;top:142.44px;font-size:12px;line-height:12px;color:#000;">3</div>
<div class="spn" style="left:1023px;top:138.5px;width:17px;height:8px"><svg width="7" height="4" viewBox="0 0 7 4" style="position:absolute;left:5.0px;top:2.0px"><polygon points="0,4 3.5,0 7,4" fill="#4d61b3"/></svg></div>
<div class="spn" style="left:1023px;top:149.5px;width:17px;height:8.5px"><svg width="7" height="4" viewBox="0 0 7 4" style="position:absolute;left:5.0px;top:2.2px"><polygon points="0,0 7,0 3.5,4" fill="#4d61b3"/></svg></div>
<div class="cb" style="left:953px;top:178px;width:14px;height:14px"></div>
<div class="t" style="left:972.5px;top:179.70px;font-size:13px;line-height:13px;color:#000;">Trig</div>
<div class="cb" style="left:1003px;top:178px;width:14px;height:14px"></div>
<div class="t" style="left:1022.5px;top:179.70px;font-size:13px;line-height:13px;color:#000;">Inv</div>
<div class="grp" style="left:952px;top:206px;width:88px;height:118px"></div>
<div style="left:958px;top:205px;width:48px;height:3px;background:#f0f0f0"></div>
<div class="t" style="left:960px;top:199.80px;font-size:13px;line-height:13px;color:#000;">Trigger</div>
<div class="t" style="left:972.5px;top:217.80px;font-size:13px;line-height:13px;color:#a0a0a0;">Slope</div>
<div class="rd" style="left:959px;top:234px;width:14px;height:14px"><i></i></div>
<div class="t" style="left:977.9px;top:235.70px;font-size:13px;line-height:13px;color:#6d6d6d;letter-spacing:0.310px;">Positive</div>
<div class="rd" style="left:959px;top:254px;width:14px;height:14px"></div>
<div class="t" style="left:977.9px;top:255.60px;font-size:13px;line-height:13px;color:#6d6d6d;letter-spacing:0.484px;">Negative</div>
<div class="t" style="left:962px;top:279.13px;font-size:9.3px;line-height:9.3px;color:#8c8c8c;font-family:'Liberation Serif',serif;letter-spacing:.1px">Delta Th %</div>
<div class="edit" style="left:962px;top:293px;width:48px;height:22px;border-color:#b9bec4"></div>
<div class="t" style="left:965.5px;top:298.44px;font-size:12px;line-height:12px;color:#6d6d6d;letter-spacing:-.5px">25</div>
<div class="spn dis" style="left:1013px;top:294px;width:16px;height:8.5px"><svg width="7" height="4" viewBox="0 0 7 4" style="position:absolute;left:4.5px;top:2.2px"><polygon points="0,4 3.5,0 7,4" fill="#a4a4a4"/></svg></div>
<div class="spn dis" style="left:1013px;top:305.5px;width:16px;height:8.5px"><svg width="7" height="4" viewBox="0 0 7 4" style="position:absolute;left:4.5px;top:2.2px"><polygon points="0,0 7,0 3.5,4" fill="#a4a4a4"/></svg></div>
<div style="left:1051px;top:71px;width:12px;height:276px;border:1px solid #b2b2b2;border-radius:2px;box-shadow:inset 0 2px 1px -1px #b0b0b0;background:linear-gradient(to right,#e4e4e4 0%,#f2f2f2 15%,#e0e0e0 48%,#cbcbcb 52%,#d2d2d2 100%)"></div>
<div style="left:1052px;top:309px;width:12px;height:39px;background:linear-gradient(to right,#a8efb5 0%,#8fe8a0 52%,#14d838 57%,#0cc42c 100%);border-radius:0 0 2px 2px"></div>
<div style="left:1052px;top:345px;width:12px;height:3px;background:linear-gradient(to bottom,rgba(255,255,255,0),rgba(255,255,255,.35))"></div>
<div class="btn" style="left:904px;top:345px;width:17px;height:17px;"><span style="line-height:17px;font-size:12px">0</span></div>
<div style="left:948px;top:328px;width:124px;height:50px;overflow:hidden">
<div class="cb" style="left:3px;top:3px;width:14px;height:14px"></div>
<div class="t" style="left:22.700000000000045px;top:2.70px;font-size:13px;line-height:13px;color:#000;">D/A</div>
<div class="cb" style="left:3px;top:22px;width:14px;height:14px"></div>
<div class="t" style="left:22.700000000000045px;top:23.49px;font-size:11px;line-height:11px;color:#000;letter-spacing:-.4px">DCremoval</div>
<div class="t" style="left:77.70000000000005px;top:24.60px;font-size:13px;line-height:13px;color:#000;">-inf dB</div>
<div class="cb" style="left:3px;top:40px;width:14px;height:14px"><svg width="14" height="14" viewBox="0 0 14 14"><path d="M3 7.2 L5.6 10.6 L10.8 2.8" fill="none" stroke="#3a4f9c" stroke-width="2.1" stroke-linecap="butt"/></svg></div>
<div class="t" style="left:22.700000000000045px;top:41.00px;font-size:13px;line-height:13px;color:#000;">Values</div>
</div>
<div class="grp" style="left:1082px;top:59px;width:180px;height:317px"></div>
<div style="left:1088px;top:58px;width:46px;height:3px;background:#f0f0f0"></div>
<div class="t" style="left:1090px;top:51.50px;font-size:13px;line-height:13px;color:#000;">Ch B(R)</div>
<div class="t" style="left:1084px;top:66.50px;font-size:13px;line-height:13px;color:#a0a0a0;letter-spacing:.4px">Vpos Trig</div>
<div class="trk" style="left:1096px;top:85px;width:3px;height:248px;"></div>
<div class="trk" style="left:1119px;top:85px;width:3px;height:248px;"></div>
<div class="thumb" style="left:1094px;top:207px;width:8px;height:4px;"></div>
<div class="thumb" style="left:1117px;top:85px;width:8px;height:3px;"></div>
<div class="btn dis" style="left:1152px;top:71px;width:18px;height:14px;"><span style="line-height:14px;font-size:12px">0</span></div>
<div class="t" style="left:1200px;top:71.80px;font-size:13px;line-height:13px;color:#a0a0a0;letter-spacing:.8px">ms/d</div>
<div class="edit" style="left:1151px;top:89px;width:57px;height:19px;"></div>
<div class="t" style="left:1154.5px;top:92.54px;font-size:12px;line-height:12px;color:#6d6d6d;letter-spacing:-.6px">0.7146</div>
<div class="spn dis" style="left:1211px;top:90px;width:18px;height:9px"><svg width="7" height="4" viewBox="0 0 7 4" style="position:absolute;left:5.5px;top:2.5px"><polygon points="0,4 3.5,0 7,4" fill="#a4a4a4"/></svg></div>
<div class="spn dis" style="left:1211px;top:101.5px;width:18px;height:10px"><svg width="7" height="4" viewBox="0 0 7 4" style="position:absolute;left:5.5px;top:3.0px"><polygon points="0,0 7,0 3.5,4" fill="#a4a4a4"/></svg></div>
<div class="t" style="left:1151.5px;top:124.50px;font-size:13px;line-height:13px;color:#a0a0a0;">Zoom</div>
<div class="t" style="left:1141px;top:141.69px;font-size:11px;line-height:11px;color:#8a8a8a;">x</div>
<div class="edit" style="left:1151px;top:138px;width:57px;height:20px;"></div>
<div class="t" style="left:1154.5px;top:142.44px;font-size:12px;line-height:12px;color:#6d6d6d;">1</div>
<div class="spn dis" style="left:1212px;top:138.5px;width:17px;height:8px"><svg width="7" height="4" viewBox="0 0 7 4" style="position:absolute;left:5.0px;top:2.0px"><polygon points="0,4 3.5,0 7,4" fill="#a4a4a4"/></svg></div>
<div class="spn dis" style="left:1212px;top:149.5px;width:17px;height:8.5px"><svg width="7" height="4" viewBox="0 0 7 4" style="position:absolute;left:5.0px;top:2.2px"><polygon points="0,0 7,0 3.5,4" fill="#a4a4a4"/></svg></div>
<div class="cb dis" style="left:1142px;top:178px;width:14px;height:14px"></div>
<div class="t" style="left:1161.5px;top:179.70px;font-size:13px;line-height:13px;color:#6d6d6d;">Trig</div>
<div class="cb dis" style="left:1192px;top:178px;width:14px;height:14px"></div>
<div class="t" style="left:1211.5px;top:179.70px;font-size:13px;line-height:13px;color:#6d6d6d;">Inv</div>
<div class="grp" style="left:1141px;top:206px;width:88px;height:118px"></div>
<div style="left:1147px;top:205px;width:48px;height:3px;background:#f0f0f0"></div>
<div class="t" style="left:1149px;top:199.80px;font-size:13px;line-height:13px;color:#000;">Trigger</div>
<div class="t" style="left:1161.5px;top:217.80px;font-size:13px;line-height:13px;color:#a0a0a0;">Slope</div>
<div class="rd" style="left:1148px;top:234px;width:14px;height:14px"><i></i></div>
<div class="t" style="left:1166.9px;top:235.70px;font-size:13px;line-height:13px;color:#6d6d6d;letter-spacing:0.310px;">Positive</div>
<div class="rd" style="left:1148px;top:254px;width:14px;height:14px"></div>
<div class="t" style="left:1166.9px;top:255.60px;font-size:13px;line-height:13px;color:#6d6d6d;letter-spacing:0.484px;">Negative</div>
<div class="t" style="left:1151px;top:279.13px;font-size:9.3px;line-height:9.3px;color:#8c8c8c;font-family:'Liberation Serif',serif;letter-spacing:.1px">Delta Th %</div>
<div class="edit" style="left:1151px;top:293px;width:48px;height:22px;border-color:#b9bec4"></div>
<div class="t" style="left:1154.5px;top:298.44px;font-size:12px;line-height:12px;color:#6d6d6d;letter-spacing:-.5px">25</div>
<div class="spn dis" style="left:1202px;top:294px;width:16px;height:8.5px"><svg width="7" height="4" viewBox="0 0 7 4" style="position:absolute;left:4.5px;top:2.2px"><polygon points="0,4 3.5,0 7,4" fill="#a4a4a4"/></svg></div>
<div class="spn dis" style="left:1202px;top:305.5px;width:16px;height:8.5px"><svg width="7" height="4" viewBox="0 0 7 4" style="position:absolute;left:4.5px;top:2.2px"><polygon points="0,0 7,0 3.5,4" fill="#a4a4a4"/></svg></div>
<div style="left:1240px;top:71px;width:12px;height:276px;border:1px solid #b2b2b2;border-radius:2px;box-shadow:inset 0 2px 1px -1px #b0b0b0;background:linear-gradient(to right,#e4e4e4 0%,#f2f2f2 15%,#e0e0e0 48%,#cbcbcb 52%,#d2d2d2 100%)"></div>
<div class="btn dis" style="left:1093px;top:345px;width:17px;height:17px;"><span style="line-height:17px;font-size:12px">0</span></div>
<div style="left:1137px;top:328px;width:124px;height:50px;overflow:hidden">
<div class="cb dis" style="left:3px;top:3px;width:14px;height:14px"></div>
<div class="t" style="left:22.700000000000045px;top:2.70px;font-size:13px;line-height:13px;color:#6d6d6d;">D/A</div>
<div class="cb dis" style="left:3px;top:22px;width:14px;height:14px"></div>
<div class="t" style="left:22.700000000000045px;top:23.49px;font-size:11px;line-height:11px;color:#6d6d6d;letter-spacing:-.4px">DCremoval</div>
<div class="t" style="left:77.70000000000005px;top:24.60px;font-size:13px;line-height:13px;color:#a0a0a0;">-inf dB</div>
<div class="cb dis" style="left:3px;top:40px;width:14px;height:14px"></div>
<div class="t" style="left:22.700000000000045px;top:41.00px;font-size:13px;line-height:13px;color:#6d6d6d;">Trig left</div>
</div>
<div id="spectrum" style="left:10px;top:387px;width:992px;height:340px;overflow:hidden"><svg width="992" height="340" viewBox="10 387 992 340" style="position:absolute;left:0;top:0;font-family:'Liberation Sans', sans-serif"><rect x="10" y="387" width="992" height="340" fill="#808080"/><rect x="62" y="387" width="889" height="319" fill="#000"/><rect x="951" y="387" width="51" height="319" fill="#00ff00"/><g shape-rendering="crispEdges" stroke="#5e5e5e" stroke-width="1"><path d="M62 387.5H951"/><path d="M62 442.5H951"/><path d="M62 497.5H951"/><path d="M62 552.5H951"/><path d="M62 607.5H951"/><path d="M62 663.5H951"/><path d="M112.5 387V706"/><path d="M163.5 387V706"/><path d="M214.5 387V706"/><path d="M265.5 387V706"/><path d="M316.5 387V706"/><path d="M367.5 387V706"/><path d="M418.5 387V706"/><path d="M469.5 387V706"/><path d="M520.5 387V706"/><path d="M571.5 387V706"/><path d="M622.5 387V706"/><path d="M673.5 387V706"/><path d="M724.5 387V706"/><path d="M775.5 387V706"/><path d="M826.5 387V706"/><path d="M877.5 387V706"/><path d="M928.5 387V706"/></g><g shape-rendering="crispEdges" stroke="#000" stroke-width="1"><path d="M235.500 387V389M235.500 441V444M235.500 496V499M235.500 551V554M235.500 606V609M235.500 662V665M235.500 704V706"/></g><g shape-rendering="crispEdges" stroke="#00ff00" stroke-width="1"><path d="M62 705.500H949"/><path d="M108.5 607V706"/><path d="M107.5 682V706"/><path d="M200.5 589V706"/><path d="M292.5 674V706"/><path d="M338.5 698V706"/><path d="M477.5 622V706"/><path d="M476.5 676V706"/><path d="M569.5 702V706"/><path d="M661.5 684V706"/></g><text transform="translate(58.500,442.9) scale(.82,1)" font-size="9.8" stroke="#d8d8d8" stroke-width=".2" fill="#d8d8d8" text-anchor="end">-6.0</text><text transform="translate(953.500,442.9) scale(.82,1)" font-size="9.8" stroke="#000" stroke-width=".25" fill="#000">-6.0</text><text transform="translate(58.500,497.9) scale(.82,1)" font-size="9.8" stroke="#d8d8d8" stroke-width=".2" fill="#d8d8d8" text-anchor="end">-12.0</text><text transform="translate(953.500,497.9) scale(.82,1)" font-size="9.8" stroke="#000" stroke-width=".25" fill="#000">-12.0</text><text transform="translate(58.500,552.9) scale(.82,1)" font-size="9.8" stroke="#d8d8d8" stroke-width=".2" fill="#d8d8d8" text-anchor="end">-18.0</text><text transform="translate(953.500,552.9) scale(.82,1)" font-size="9.8" stroke="#000" stroke-width=".25" fill="#000">-18.0</text><text transform="translate(58.500,607.9) scale(.82,1)" font-size="9.8" stroke="#d8d8d8" stroke-width=".2" fill="#d8d8d8" text-anchor="end">-24.0</text><text transform="translate(953.500,607.9) scale(.82,1)" font-size="9.8" stroke="#000" stroke-width=".25" fill="#000">-24.0</text><text transform="translate(58.500,663.9) scale(.82,1)" font-size="9.8" stroke="#d8d8d8" stroke-width=".2" fill="#d8d8d8" text-anchor="end">-30.0</text><text transform="translate(953.500,663.9) scale(.82,1)" font-size="9.8" stroke="#000" stroke-width=".25" fill="#000">-30.0</text><text transform="translate(58.500,387.9) scale(.82,1)" font-size="9.8" stroke="#d8d8d8" stroke-width=".2" fill="#d8d8d8" text-anchor="end">0.0</text><text transform="translate(956,387.9) scale(.82,1)" font-size="9.8" stroke="#000" stroke-width=".25" fill="#000">0.0</text><text x="11" y="395.800" font-size="10.5" font-weight="bold" fill="#0000ff" font-family="'Liberation Serif',serif">dBr</text><text x="982" y="395.800" font-size="10.5" font-weight="bold" fill="#0000ff" font-family="'Liberation Serif',serif">dBr</text><rect x="886" y="391" width="65" height="20" fill="#000"/><text x="886" y="407.800" font-size="12.8" fill="#00ffff" textLength="63.5" lengthAdjust="spacingAndGlyphs">7558.59 Hz</text><text x="987.500" y="718" font-size="13" font-weight="bold" fill="#0000ff">Hz</text><text x="63" y="718.400" font-size="11" fill="#000" stroke="#000" stroke-width=".2" text-anchor="middle">50</text><text x="114" y="718.400" font-size="11" fill="#000" stroke="#000" stroke-width=".2" text-anchor="middle">2.7k</text><text x="165" y="718.400" font-size="11" fill="#000" stroke="#000" stroke-width=".2" text-anchor="middle">5.5k</text><text x="216" y="718.400" font-size="11" fill="#000" stroke="#000" stroke-width=".2" text-anchor="middle">8.2k</text><text x="267" y="718.400" font-size="11" fill="#000" stroke="#000" stroke-width=".2" text-anchor="middle">11.0k</text><text x="318" y="718.400" font-size="11" fill="#000" stroke="#000" stroke-width=".2" text-anchor="middle">13.7k</text><text x="369" y="718.400" font-size="11" fill="#000" stroke="#000" stroke-width=".2" text-anchor="middle">16.5k</text><text x="420" y="718.400" font-size="11" fill="#000" stroke="#000" stroke-width=".2" text-anchor="middle">19.2k</text><text x="471" y="718.400" font-size="11" fill="#000" stroke="#000" stroke-width=".2" text-anchor="middle">22.0k</text><text x="522" y="718.400" font-size="11" fill="#000" stroke="#000" stroke-width=".2" text-anchor="middle">24.7k</text><text x="573" y="718.400" font-size="11" fill="#000" stroke="#000" stroke-width=".2" text-anchor="middle">27.5k</text><text x="624" y="718.400" font-size="11" fill="#000" stroke="#000" stroke-width=".2" text-anchor="middle">30.2k</text><text x="675" y="718.400" font-size="11" fill="#000" stroke="#000" stroke-width=".2" text-anchor="middle">33.0k</text><text x="726" y="718.400" font-size="11" fill="#000" stroke="#000" stroke-width=".2" text-anchor="middle">35.7k</text><text x="777" y="718.400" font-size="11" fill="#000" stroke="#000" stroke-width=".2" text-anchor="middle">38.5k</text><text x="828" y="718.400" font-size="11" fill="#000" stroke="#000" stroke-width=".2" text-anchor="middle">41.3k</text><text x="879" y="718.400" font-size="11" fill="#000" stroke="#000" stroke-width=".2" text-anchor="middle">44.0k</text><text x="930" y="718.400" font-size="11" fill="#000" stroke="#000" stroke-width=".2" text-anchor="middle">46.8k</text></svg></div>
<div style="left:1009px;top:407px;width:264px;height:321px;border:1px solid #898c95;background:#fff"></div>
<div class="tab" style="left:1066px;top:386px;width:51px;height:20px;"></div>
<div class="t" style="left:1071.5px;top:390.50px;font-size:13px;line-height:13px;color:#000;">More</div>
<div class="tab" style="left:1119px;top:386px;width:52px;height:20px;"></div>
<div class="t" style="left:1125.5px;top:390.50px;font-size:13px;line-height:13px;color:#000;">Cepst</div>
<div class="tab" style="left:1173px;top:386px;width:52px;height:20px;"></div>
<div class="t" style="left:1179px;top:390.50px;font-size:13px;line-height:13px;color:#000;">THD</div>
<div class="tab" style="left:1227px;top:386px;width:20px;height:20px;overflow:hidden"><div class="t" style="left:5px;top:4.5px;font-size:13px;line-height:13px">U</div></div>
<div style="left:1009px;top:384px;width:56px;height:24px;border:1px solid #898c95;border-bottom:none;background:#fff"></div>
<div class="t" style="left:1017.5px;top:389.30px;font-size:13px;line-height:13px;color:#000;">Main</div>
<div style="left:1237px;top:385px;width:40px;height:22px;background:#f0f0f0"></div>
<div style="left:1238px;top:386px;width:17px;height:17px;border:1px solid #c8c8c8;background:linear-gradient(to bottom,#f4f4f4,#e4e4e4 50%,#d8d8d8 50%,#d0d0d0);box-shadow:inset 0 0 0 1px #f8f8f8"><svg width="5" height="8" viewBox="0 0 5 8" style="position:absolute;left:6px;top:4.5px"><polygon points="4.5,0.5 4.5,7.5 0,4" fill="#3f5fc8"/></svg></div>
<div style="left:1257px;top:386px;width:17px;height:17px;border:1px solid #c8c8c8;background:linear-gradient(to bottom,#f4f4f4,#e4e4e4 50%,#d8d8d8 50%,#d0d0d0);box-shadow:inset 0 0 0 1px #f8f8f8"><svg width="5" height="8" viewBox="0 0 5 8" style="position:absolute;left:6px;top:4.5px"><polygon points="0.5,0.5 0.5,7.5 5,4" fill="#3f5fc8"/></svg></div>
<div class="grp" style="left:1013px;top:411px;width:137px;height:182px"></div>
<div class="cb" style="left:1023px;top:416px;width:14px;height:14px"></div>
<div class="t" style="left:1041.9px;top:417.60px;font-size:13px;line-height:13px;color:#000;letter-spacing:0.092px;">Stay on top</div>
<div class="cb" style="left:1023px;top:435px;width:14px;height:14px"></div>
<div class="t" style="left:1041.9px;top:436.40px;font-size:13px;line-height:13px;color:#000;letter-spacing:0.230px;">Volt meter</div>
<div class="cb" style="left:1023px;top:455px;width:14px;height:14px"></div>
<div class="t" style="left:1041.9px;top:456.40px;font-size:13px;line-height:13px;color:#000;letter-spacing:0.151px;">Freq. meter</div>
<div class="cb" style="left:1023px;top:475px;width:14px;height:14px"></div>
<div class="t" style="left:1041.9px;top:476.90px;font-size:13px;line-height:13px;color:#000;letter-spacing:0.618px;">Wave Gen./Rec</div>
<div class="cb" style="left:1023px;top:496px;width:14px;height:14px"></div>
<div class="t" style="left:1041.9px;top:497.75px;font-size:13px;line-height:13px;color:#000;letter-spacing:0.456px;">Phase</div>
<div class="cb" style="left:1023px;top:514px;width:14px;height:14px"></div>
<div class="t" style="left:1041.9px;top:515.60px;font-size:13px;line-height:13px;color:#000;letter-spacing:0.479px;">THD view</div>
<div class="cb" style="left:1023px;top:534px;width:14px;height:14px"></div>
<div class="t" style="left:1041.9px;top:535.60px;font-size:13px;line-height:13px;color:#000;letter-spacing:0.406px;">THD+Noise view</div>
<div class="cb" style="left:1023px;top:554px;width:14px;height:14px"></div>
<div class="t" style="left:1041.9px;top:555.90px;font-size:13px;line-height:13px;color:#000;letter-spacing:0.100px;">ZRLC meter</div>
<div class="cb" style="left:1023px;top:573px;width:14px;height:14px"></div>
<div class="t" style="left:1041.9px;top:574.60px;font-size:13px;line-height:13px;color:#000;letter-spacing:0.467px;">Fast Rec./Play</div>
<div class="btn" style="left:1162px;top:418px;width:105px;height:17px;"><span style=""></span></div>
<div class="t" style="left:1170.9px;top:421.40px;font-size:13px;line-height:13px;color:#000;letter-spacing:0.261px;">Capture scope</div>
<div class="btn" style="left:1162px;top:442px;width:105px;height:16px;"><span style=""></span></div>
<div class="t" style="left:1163.15px;top:444.70px;font-size:13px;line-height:13px;color:#000;letter-spacing:0.108px;">Capture spectrum</div>
<div class="btn" style="left:1160px;top:464px;width:69px;height:17px;"><span style=""></span></div>
<div class="t" style="left:1169.4px;top:467.40px;font-size:13px;line-height:13px;color:#000;letter-spacing:0.521px;">WaveOn</div>
<div class="btn" style="left:1236px;top:464px;width:31px;height:17px;"><span style=""></span></div>
<div class="t" style="left:1242.9px;top:467.40px;font-size:13px;line-height:13px;color:#000;letter-spacing:-0.496px;">Info</div>
<div class="grp" style="left:1161px;top:490px;width:107px;height:103px"></div>
<div class="t" style="left:1182.3px;top:506.30px;font-size:13px;line-height:13px;color:#000;">wait</div>
<div class="edit" style="left:1220px;top:502px;width:39px;height:22px;"></div>
<div class="t" style="left:1223px;top:507.04px;font-size:12px;line-height:12px;color:#000;letter-spacing:-.5px">281</div>
<div class="t" style="left:1182.3px;top:535.30px;font-size:13px;line-height:13px;color:#000;">req.</div>
<div class="edit" style="left:1220px;top:531px;width:39px;height:22px;"></div>
<div class="t" style="left:1223px;top:536.04px;font-size:12px;line-height:12px;color:#000;letter-spacing:-.5px">-8</div>
<div class="t" style="left:1182.3px;top:565.60px;font-size:13px;line-height:13px;color:#000;">used</div>
<div class="edit" style="left:1220px;top:559px;width:39px;height:22px;"></div>
<div class="t" style="left:1223px;top:564.04px;font-size:12px;line-height:12px;color:#000;letter-spacing:-.5px">62</div>
<div class="grp" style="left:1013px;top:604px;width:137px;height:128px"></div>
<div style="left:1018.6px;top:603px;width:47px;height:3px;background:#fff"></div>
<div class="t" style="left:1020.0px;top:597.50px;font-size:13px;line-height:13px;color:#000;letter-spacing:0.070px;">Y - axis</div>
<div class="trk" style="left:1036px;top:622px;width:6px;height:110px;"></div>
<div style="left:1028px;top:625px;width:4px;height:1px;background:#c4c4c4"></div>
<div style="left:1049px;top:625px;width:4px;height:1px;background:#c4c4c4"></div>
<div style="left:1028px;top:651px;width:4px;height:1px;background:#c4c4c4"></div>
<div style="left:1049px;top:651px;width:4px;height:1px;background:#c4c4c4"></div>
<div style="left:1028px;top:677px;width:4px;height:1px;background:#c4c4c4"></div>
<div style="left:1049px;top:677px;width:4px;height:1px;background:#c4c4c4"></div>
<div style="left:1028px;top:704px;width:4px;height:1px;background:#c4c4c4"></div>
<div style="left:1049px;top:704px;width:4px;height:1px;background:#c4c4c4"></div>
<div class="thumb" style="left:1033px;top:701px;width:13px;height:5px;"></div>
<div class="cb" style="left:1082px;top:612px;width:14px;height:14px"><svg width="14" height="14" viewBox="0 0 14 14"><path d="M3 7.2 L5.6 10.6 L10.8 2.8" fill="none" stroke="#3a4f9c" stroke-width="2.1" stroke-linecap="butt"/></svg></div>
<div class="t" style="left:1101.5px;top:613.80px;font-size:13px;line-height:13px;color:#000;">Log</div>
<div class="cb" style="left:1082px;top:635px;width:14px;height:14px"></div>
<div class="t" style="left:1101.5px;top:636.50px;font-size:13px;line-height:13px;color:#000;">Hold</div>
<div class="cb dis" style="left:1082px;top:658px;width:14px;height:14px"><svg width="14" height="14" viewBox="0 0 14 14"><path d="M3 7.2 L5.6 10.6 L10.8 2.8" fill="none" stroke="#b5b5b5" stroke-width="2.1" stroke-linecap="butt"/></svg></div>
<div class="t" style="left:1101.5px;top:659.60px;font-size:13px;line-height:13px;color:#8a8a8a;">Lines</div>
<div class="cb" style="left:1082px;top:679px;width:14px;height:14px"></div>
<div class="t" style="left:1101.5px;top:680.60px;font-size:13px;line-height:13px;color:#000;">Info</div>
<div class="t" style="left:1071.7px;top:699.60px;font-size:13px;line-height:13px;color:#000;letter-spacing:0.619px;">Average</div>
<div class="combo" style="left:1072px;top:714px;width:68px;height:22px"><span class="t" style="position:absolute;left:5px;top:4px;font-size:13px;line-height:16px">5</span><svg style="position:absolute;left:54px;top:10px" width="9" height="5" viewBox="0 0 9 5"><polygon points="0,0 9,0 4.5,5" fill="#000"/></svg></div>
<div class="grp" style="left:1161px;top:604.5px;width:107px;height:119px"></div>
<div style="left:1166.8px;top:603.5px;width:46px;height:3px;background:#fff"></div>
<div class="t" style="left:1168.2px;top:597.40px;font-size:13px;line-height:13px;color:#000;letter-spacing:-0.135px;">X - axis</div>
<div class="cb" style="left:1171px;top:615px;width:14px;height:14px"></div>
<div class="t" style="left:1190.6px;top:616.30px;font-size:13px;line-height:13px;color:#000;">Log</div>
<div class="cb" style="left:1226px;top:615px;width:14px;height:14px"></div>
<div class="t" style="left:1245.6px;top:616.30px;font-size:13px;line-height:13px;color:#000;">3D</div>
<div class="cb" style="left:1171px;top:637px;width:14px;height:14px"></div>
<div class="t" style="left:1190.0px;top:638.40px;font-size:13px;line-height:13px;color:#000;letter-spacing:-0.117px;">true X</div>
<div class="combo" style="left:1171px;top:656px;width:88px;height:22px"><span class="t" style="position:absolute;left:4px;top:4px;font-size:13px;line-height:16px">Fit screen</span><svg style="position:absolute;left:74px;top:10px" width="9" height="5" viewBox="0 0 9 5"><polygon points="0,0 9,0 4.5,5" fill="#000"/></svg></div>
<div class="combo dis" style="left:1171px;top:690px;width:88px;height:22px"><span class="t" style="position:absolute;left:4px;top:4px;font-size:13px;line-height:16px;color:#8a8a8a">1/1</span><svg style="position:absolute;left:74px;top:10px" width="9" height="5" viewBox="0 0 9 5"><polygon points="0,0 9,0 4.5,5" fill="#777"/></svg></div>
<div style="left:1003px;top:729px;width:277px;height:1px;background:#f0f0f0"></div>
<div style="left:0px;top:730px;width:1280px;height:1px;background:#a0a0a0"></div>
<div style="left:0px;top:731px;width:1280px;height:1px;background:#fff"></div>
<div style="left:0px;top:732px;width:1280px;height:20px;background:#f3f0f0"></div>
<div style="left:0px;top:752px;width:1280px;height:1px;background:#fbfbfb"></div>
<div class="t" style="left:2.9px;top:735.07px;font-size:14.45px;line-height:14.45px;color:#000;letter-spacing:0.163px;font-style:italic;">[Points = 32768]</div>
<div class="t" style="left:118.9px;top:735.07px;font-size:14.45px;line-height:14.45px;color:#000;letter-spacing:0.157px;font-style:italic;">[Sampling = 96000Hz]</div>
<div class="t" style="left:273.15px;top:735.07px;font-size:14.45px;line-height:14.45px;color:#000;letter-spacing:0.196px;font-style:italic;">[Smoothing = Hanning]</div>
<div class="t" style="left:433.15px;top:735.07px;font-size:14.45px;line-height:14.45px;color:#000;letter-spacing:0.098px;font-style:italic;">[Ini = C:\Program Files\Visual Analyser\VA.ini]</div>
<div class="t" style="left:738.15px;top:735.07px;font-size:14.45px;line-height:14.45px;color:#000;letter-spacing:-0.354px;font-style:italic;">[UID = 4BCEA4329EE3B30A28DE8B5AFC376846]</div>
<div id="taskbar" style="left:0;top:753px;width:1280px;height:8px;overflow:hidden;background:
 linear-gradient(to bottom, rgba(255,255,255,.55) 0, rgba(255,255,255,.15) 2px, rgba(255,255,255,0) 3px),
 linear-gradient(to right,#1d6fc0 0,#2a86d8 120px,#2f9ae8 260px,#2f92e0 300px,#3a78c8 420px,#2d63b0 560px,#1f58a8 700px,#16509c 1000px,#0f4a94 1180px,#16509c 1280px);">
 <div style="left:10px;top:2px;width:46px;height:46px;border-radius:50%;border:1px solid #cfe6fa;background:radial-gradient(circle at 50% 40%,#8fc0ea,#2a6db8)"></div>
 <div style="left:88px;top:5px;width:34px;height:10px;background:#f4f4f4;border-radius:2px 2px 0 0"></div>
 <div style="left:158px;top:6px;width:22px;height:6px;background:#e2b24a;border-radius:2px 2px 0 0"></div>
 <div style="left:232px;top:5px;width:30px;height:20px;border-radius:50%;background:#e03a2a"></div>
 <div style="left:281px;top:1px;width:66px;height:12px;border:1px solid #cfe0f4;border-radius:3px 3px 0 0;background:linear-gradient(to bottom,#b8d4f2,#8fb8e6)"></div>
 <div style="left:295px;top:4px;width:38px;height:6px;border:1px solid #00e000;border-bottom:none;background:repeating-linear-gradient(to right,rgba(0,0,0,0) 0,rgba(0,0,0,0) 4px,#00e000 4px,#00e000 5px)"></div>
 <div style="left:326px;top:5px;width:5px;height:3px;background:#e02020"></div>
</div>
<div style="left:0px;top:0px;width:1280px;height:1px;background:#ff0000"></div>
<div style="left:0px;top:760px;width:1280px;height:1px;background:#ff0000"></div>
<div style="left:0px;top:0px;width:1px;height:761px;background:#ff0000"></div>
<div style="left:1279px;top:0px;width:1px;height:761px;background:#ff0000"></div>
</div></body></html>
